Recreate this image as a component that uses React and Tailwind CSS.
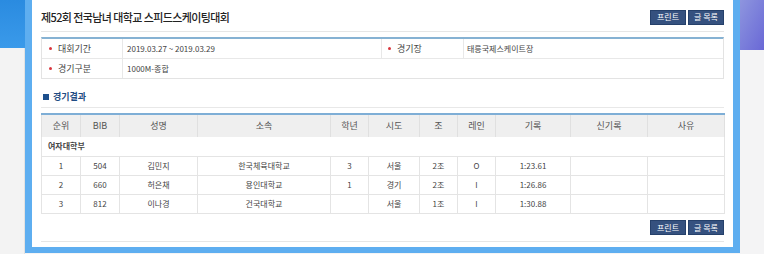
const cols = [39, 39, 78, 133, 38, 51, 38, 38, 75, 77, 77];

const head = ["순위", "BIB", "성명", "소속", "학년", "시도", "조", "레인", "기록", "신기록", "사유"];

const rows = [
  ["1", "504", "김민지", "한국체육대학교", "3", "서울", "2조", "O", "1:23.61", "", ""],
  ["2", "660", "허은채", "용인대학교", "1", "경기", "2조", "I", "1:26.86", "", ""],
  ["3", "812", "이나경", "건국대학교", "", "서울", "1조", "I", "1:30.88", "", ""],
];

const Buttons = () => (
  <div className="flex gap-[2px]">
    <button className="w-[36px] h-[15px] bg-[#35517f] border border-[#25406a] text-white text-[8px] leading-none">
      프린트
    </button>
    <button className="w-[36px] h-[15px] bg-[#35517f] border border-[#25406a] text-white text-[8px] leading-none">
      글 목록
    </button>
  </div>
);

const Bullet = () => <span className="w-[3px] h-[3px] rounded-full bg-[#d9363e] mr-[6px]" />;

export default function App() {
  return (
    <div
      className="flex w-[764px] h-[254px] bg-[#f4f4f5] text-[#333] overflow-hidden"
      style={{ fontFamily: '"Noto Sans CJK KR", "Noto Sans", sans-serif' }}
    >
      {/* left background strip */}
      <div className="w-[25px] flex flex-col">
        <div className="h-[48px] bg-gradient-to-b from-[#2a8be0] to-[#3a9aea]" />
        <div className="flex-1 bg-[#f3f3f3] border-r border-[#e2e2e2]" />
      </div>

      {/* main panel */}
      <div className="w-[715px] h-[253px] bg-white border-x-[7px] border-b-[6px] border-[#5eaef0] px-[9px]">
        <div className="h-[32px] flex items-center justify-between border-b border-[#e6e6e6] pt-[3px]">
          <h1 className="text-[11px] font-medium text-[#222] tracking-[-0.6px]">제52회 전국남녀 대학교 스피드스케이팅대회</h1>
          <Buttons />
        </div>

        {/* info table */}
        <div className="mt-[5px] border-t-2 border-[#86b2d3] border-x border-b border-x-[#e3e3e3] border-b-[#e3e3e3] text-[8px] text-[#444]">
          <div className="flex h-[20px] border-b border-[#e8e8e8]">
            <div className="w-[81px] flex items-center pl-[7px] border-r border-[#e8e8e8]">
              <Bullet />
              <span className="text-[9px]">대회기간</span>
            </div>
            <div className="w-[259px] flex items-center pl-[4px] border-r border-[#e8e8e8]">2019.03.27 ~ 2019.03.29</div>
            <div className="w-[82px] flex items-center pl-[6px] border-r border-[#e8e8e8]">
              <Bullet />
              <span className="text-[9px]">경기장</span>
            </div>
            <div className="flex-1 flex items-center pl-[3px]">태릉국제스케이트장</div>
          </div>
          <div className="flex h-[19px]">
            <div className="w-[81px] flex items-center pl-[7px] border-r border-[#e8e8e8]">
              <Bullet />
              <span className="text-[9px]">경기구분</span>
            </div>
            <div className="flex-1 flex items-center pl-[4px]">1000M-종합</div>
          </div>
        </div>

        {/* section title */}
        <div className="h-[29px] flex items-center border-b border-[#e8e8e8] pt-[7px] pl-[2px]">
          <span className="w-[6px] h-[6px] bg-[#1d4f8c] mr-[4px]" />
          <span className="text-[9px] font-bold text-[#1f4d84]">경기결과</span>
        </div>

        {/* results */}
        <table className="mt-[5px] table-fixed border-collapse w-[683px] text-[8px] text-[#444] border-t-2 border-[#7eaed6]">
          <colgroup>
            {cols.map((w, i) => (
              <col key={i} style={{ width: w }} />
            ))}
          </colgroup>
          <thead>
            <tr className="h-[23px] bg-[#efefef]">
              {head.map((h) => (
                <th key={h} className="font-normal text-[9px] text-[#555] border-x border-[#e0e0e0]">
                  {h}
                </th>
              ))}
            </tr>
          </thead>
          <tbody>
            <tr className="h-[19px]">
              <td colSpan={11} className="pl-[6px] font-bold border-x border-b border-[#e4e4e4]">
                여자대학부
              </td>
            </tr>
            {rows.map((r, i) => (
              <tr key={i} className="h-[19px]">
                {r.map((c, j) => (
                  <td key={j} className="text-center border border-[#e4e4e4]">
                    {c}
                  </td>
                ))}
              </tr>
            ))}
          </tbody>
        </table>

        <div className="h-[28px] flex justify-end items-center border-b border-[#e6e6e6] pt-[1px]">
          <Buttons />
        </div>
      </div>

      {/* right background strip */}
      <div className="flex-1 flex flex-col">
        <div className="h-[50px] bg-gradient-to-br from-[#8e95de] to-[#6a68d6]" />
        <div className="flex-1 bg-[#f4f4f5]" />
      </div>
    </div>
  );
}
